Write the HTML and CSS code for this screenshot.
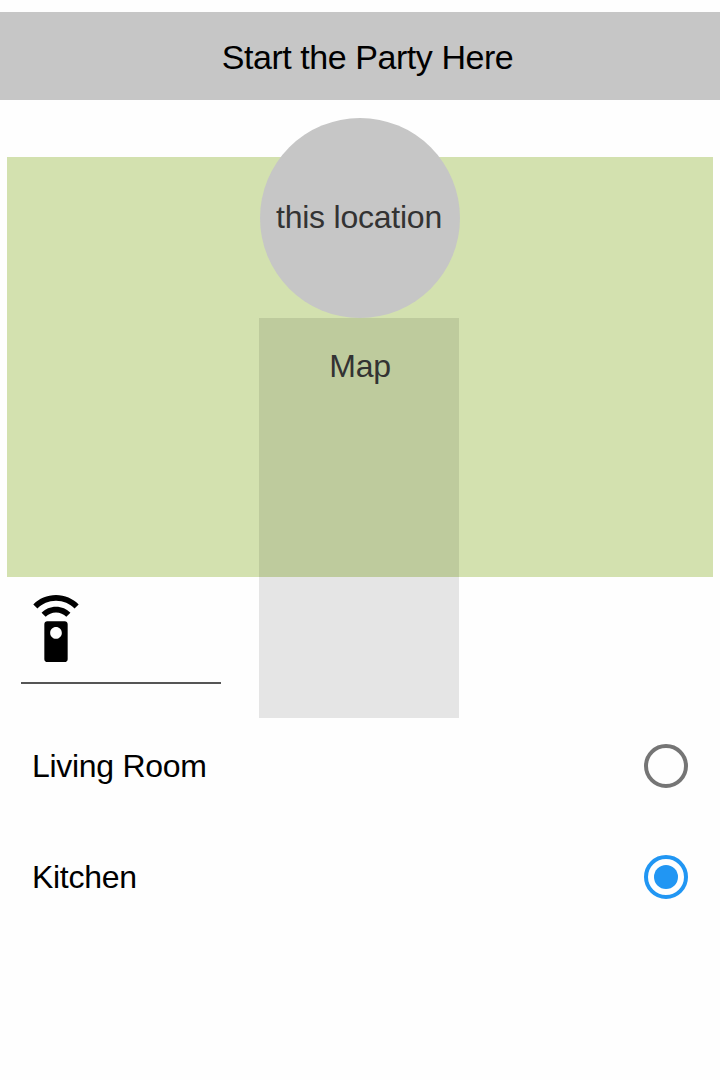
FILE: index.html
```html
<!DOCTYPE html>
<html lang="en">
<head>
<meta charset="utf-8">
<title>Start the Party Here</title>
<link rel="stylesheet" href="styles.css">
</head>
<body>
<main class="screen">
  <header class="title-bar"><h1 class="title">Start the Party Here</h1></header>
  <section class="map">
    <span class="map-label">Map</span>
    <div class="pin-stem"></div>
    <div class="pin-head"><span class="pin-text">this location</span></div>
  </section>
  <div class="remote">
    <svg class="remote-icon" viewBox="0 0 24 24" aria-hidden="true">
      <path d="M15 9H9c-.55 0-1 .45-1 1v12c0 .55.45 1 1 1h6c.55 0 1-.45 1-1V10c0-.55-.45-1-1-1zm-3 6c-1.1 0-2-.9-2-2s.9-2 2-2 2 .9 2 2-.9 2-2 2zM7.05 6.05l1.41 1.41C9.37 6.56 10.62 6 12 6s2.63.56 3.54 1.46l1.41-1.41C15.68 4.78 13.93 4 12 4s-3.68.78-4.95 2.05zM12 0C8.96 0 6.21 1.23 4.22 3.22l1.41 1.41C7.26 3.01 9.51 2 12 2s4.74 1.01 6.36 2.64l1.41-1.41C17.79 1.23 15.04 0 12 0z"/>
    </svg>
  </div>
  <div class="rooms">
    <label class="room"><span class="room-name">Living Room</span><input class="radio" type="radio" name="room"></label>
    <label class="room"><span class="room-name">Kitchen</span><input class="radio" type="radio" name="room" checked></label>
  </div>
</main>
</body>
</html>
```
FILE: styles.css
```css
* { box-sizing: border-box; }
body {
  margin: 0;
  background: #fefefe;
  font-family: "Liberation Sans", Arial, sans-serif;
  font-size: 32px;
  color: #000;
}
.screen { height: 1080px; padding-top: 12px; overflow: hidden; }
.title-bar {
  display: flex;
  align-items: center;
  justify-content: center;
  height: 88px;
  padding: 2px 0 0 15px;
  background: #c6c6c6;
}
.title { margin: 0; font-size: 34px; font-weight: 400; white-space: nowrap; letter-spacing: -0.44px; }
.map {
  position: relative;
  display: flex;
  align-items: center;
  justify-content: center;
  height: 420px;
  margin: 57px 7px 0;
  padding-bottom: 2px;
  background: #d3e1af;
  color: #333;
}
.map-label { z-index: 1; letter-spacing: -0.3px; }
.pin-stem {
  position: absolute;
  top: 161px;
  left: 252px;
  width: 200px;
  height: 400px;
  background: rgba(0, 0, 0, 0.098);
}
.pin-head {
  position: absolute;
  top: -39px;
  left: 253px;
  display: flex;
  align-items: center;
  justify-content: center;
  width: 200px;
  height: 200px;
  padding: 0 2px 2px 0;
  border-radius: 50%;
  background: #c6c6c6;
}
.pin-text { white-space: nowrap; letter-spacing: -0.23px; }
.remote {
  width: 200px;
  height: 89px;
  margin: 18px 0 0 21px;
  border-bottom: 2px solid #555;
}
.remote-icon { display: block; width: 70px; height: 70px; }
.rooms { padding: 26px 32px 0; }
.room { display: flex; align-items: center; justify-content: space-between; height: 111px; }
.room-name { padding-top: 1px; letter-spacing: -0.3px; }
.radio {
  appearance: none;
  display: grid;
  place-items: center;
  width: 44px;
  height: 44px;
  margin: 0;
  border: 4px solid #757575;
  border-radius: 50%;
}
.radio:checked { border-color: #2196f3; }
.radio:checked::before {
  content: "";
  width: 24px;
  height: 24px;
  border-radius: 50%;
  background: #2196f3;
}
```
